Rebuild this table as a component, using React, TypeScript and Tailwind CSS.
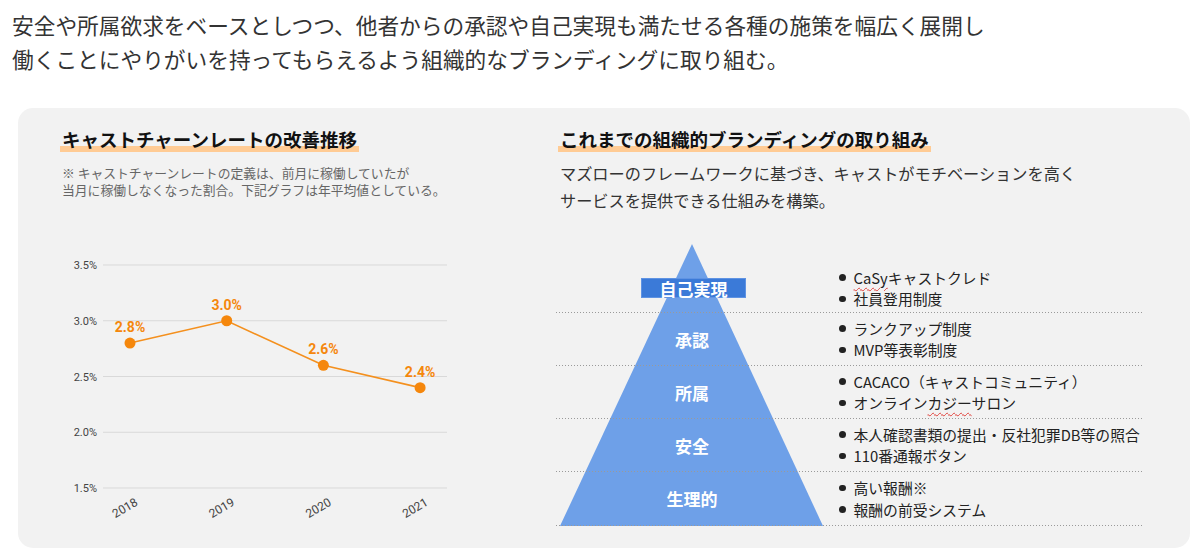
import React from "react";

const jp = "font-['Noto_Sans_CJK_JP','Noto_Sans',sans-serif]";

// chart data (page coordinates are used inside the svg via viewBox)
const points = [
  { year: "2018", value: 2.8 },
  { year: "2019", value: 3.0 },
  { year: "2020", value: 2.6 },
  { year: "2021", value: 2.4 },
];
const ticks = [3.5, 3.0, 2.5, 2.0, 1.5];
const yOf = (v: number) => 488 - ((v - 1.5) / 0.5) * 55.75;
const xOf = (i: number) => 130 + i * 96.7;

const ChurnChart = () => {
  const line = points.map((p, i) => `${xOf(i)},${yOf(p.value)}`).join(" ");
  return (
    <svg
      width={420}
      height={290}
      viewBox="40 245 420 290"
      className="block ml-[22px] mt-[47.5px]"
    >
      {ticks.map((t) => (
        <g key={t}>
          <line x1={103} x2={447} y1={yOf(t)} y2={yOf(t)} stroke="#d9d9d9" strokeWidth={1} />
          <text
            x={97}
            y={yOf(t) + 4}
            textAnchor="end"
            fontSize={11}
            fill="#444"
            fontFamily="Roboto, sans-serif"
          >
            {t.toFixed(1)}%
          </text>
        </g>
      ))}
      <polyline points={line} fill="none" stroke="#f4901e" strokeWidth={1.6} />
      {points.map((p, i) => (
        <g key={p.year}>
          <circle cx={xOf(i)} cy={yOf(p.value)} r={5.5} fill="#f5870c" />
          <text
            x={xOf(i)}
            y={yOf(p.value) - 11}
            textAnchor="middle"
            fontSize={14}
            fontWeight={700}
            fill="#f5870c"
            fontFamily="Roboto, sans-serif"
          >
            {p.value.toFixed(1)}%
          </text>
          <text
            x={xOf(i) - 5}
            y={512}
            textAnchor="middle"
            fontSize={12}
            fill="#444"
            fontFamily="Roboto, sans-serif"
            transform={`rotate(-30 ${xOf(i) - 5} 508)`}
          >
            {p.year}
          </text>
        </g>
      ))}
    </svg>
  );
};

const Dotted = () => (
  <div className="h-px w-full bg-[linear-gradient(to_right,#9a9a9a_1px,transparent_1px)] bg-[length:3px_1px]" />
);

const Bullet = ({ children }: { children: React.ReactNode }) => (
  <li className="flex items-center">
    <span className="w-[6.5px] h-[6.5px] rounded-full bg-[#222] mr-[8px] shrink-0" />
    <span>{children}</span>
  </li>
);

const squiggle = "underline decoration-wavy decoration-[#e0403a] decoration-1 underline-offset-[3px]";

type Row = { label: string; items: React.ReactNode[]; height: string; top?: string; boxed?: boolean };

const rows: Row[] = [
  {
    label: "自己実現",
    boxed: true,
    height: "h-[69px]",
    top: "pt-[20px]",
    items: [
      <>
        <span className={squiggle}>CaSy</span>キャストクレド
      </>,
      "社員登用制度",
    ],
  },
  { label: "承認", height: "h-[53px]", items: ["ランクアップ制度", "MVP等表彰制度"] },
  {
    label: "所属",
    height: "h-[53px]",
    items: [
      "CACACO（キャストコミュニティ）",
      <>
        オンライン<span className={squiggle}>カジー</span>サロン
      </>,
    ],
  },
  {
    label: "安全",
    height: "h-[53px]",
    items: ["本人確認書類の提出・反社犯罪DB等の照合", "110番通報ボタン"],
  },
  { label: "生理的", height: "h-[54px]", items: ["高い報酬※", "報酬の前受システム"] },
];

const Pyramid = () => (
  <div className="relative w-[587px] mt-[30.5px]">
    <svg width={272} height={282} className="absolute left-0 top-0">
      <polygon points="136,0 4,282 267,282" fill="#6ea0e8" />
    </svg>
    <div className="relative flex flex-col">
      {rows.map((r) => (
        <div key={r.label} className={`${r.height} flex flex-col`}>
          <div className={`flex-1 flex items-center ${r.top ?? ""}`}>
            <div className="w-[272px] shrink-0 flex justify-center">
              {r.boxed ? (
                <span className="h-[20px] w-[105px] ml-[3px] flex items-center justify-center bg-[#3b7ad8] border border-[#5f93e3] text-white font-bold text-[17px] leading-none">
                  {r.label}
                </span>
              ) : (
                <span className="text-white font-bold text-[17px] leading-none">{r.label}</span>
              )}
            </div>
            <ul className="ml-[11px] whitespace-nowrap text-[14.8px] leading-[21.5px] text-[#222]">
              {r.items.map((it, i) => (
                <Bullet key={i}>{it}</Bullet>
              ))}
            </ul>
          </div>
          <Dotted />
        </div>
      ))}
    </div>
  </div>
);

const Title = ({ children, className }: { children: React.ReactNode; className?: string }) => (
  <h2
    className={`inline-block px-[2px] text-[18.5px] leading-[26px] font-bold text-[#111] bg-[linear-gradient(transparent_20px,#ffcb94_20px)] ${className ?? ""}`}
  >
    {children}
  </h2>
);

const App = () => {
  return (
    <div className={`${jp} w-[1200px] h-[556px] bg-white overflow-hidden`}>
      <p className="pt-[8px] pl-[12px] text-[21.7px] leading-[34px] text-[#333]">
        安全や所属欲求をベースとしつつ、他者からの承認や自己実現も満たせる各種の施策を幅広く展開し
        <br />
        働くことにやりがいを持ってもらえるよう組織的なブランディングに取り組む。
      </p>

      <div className="mt-[32px] ml-[18px] w-[1172px] h-[440px] rounded-[15px] bg-[#f2f2f2] flex">
        <div className="w-[538px] pt-[18px]">
          <Title className="ml-[42px]">キャストチャーンレートの改善推移</Title>
          <p className="ml-[44px] mt-[11.5px] text-[12.8px] leading-[17px] text-[#666]">
            ※ キャストチャーンレートの定義は、前月に稼働していたが
            <br />
            当月に稼働しなくなった割合。下記グラフは年平均値としている。
          </p>
          <ChurnChart />
        </div>

        <div className="flex-1 pt-[18px]">
          <Title className="ml-[2px]">これまでの組織的ブランディングの取り組み</Title>
          <p className="ml-[4px] mt-[7.5px] text-[16.2px] leading-[27px] text-[#333]">
            マズローのフレームワークに基づき、キャストがモチベーションを高く
            <br />
            サービスを提供できる仕組みを構築。
          </p>
          <Pyramid />
        </div>
      </div>
    </div>
  );
};

export default App;
